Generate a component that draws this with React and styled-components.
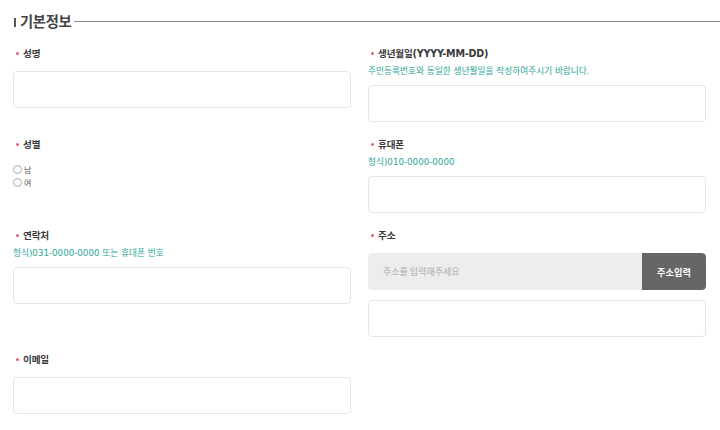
import React from "react";
import styled, { createGlobalStyle } from "styled-components";

const Global = createGlobalStyle`
  html, body { margin: 0; padding: 0; background: #fff; }
  body { font-family: "Noto Sans CJK KR", "Noto Sans", sans-serif; color: #333; }
  * { box-sizing: border-box; }
`;

const Page = styled.div`
  width: 720px;
  height: 430px;
  padding: 13px 0 0 13px;
  overflow: hidden;
`;

const TitleRow = styled.div`
  display: flex;
  align-items: center;
  height: 16px;
  margin-bottom: 17px;
`;

const TitleBar = styled.span`
  width: 2px;
  height: 9px;
  background: #555;
  margin: 2px 4px 0 1px;
`;

const TitleText = styled.h2`
  margin: 0;
  font-size: 14.3px;
  font-weight: 700;
  color: #444;
  line-height: 16px;
  letter-spacing: -0.3px;
`;

const TitleLine = styled.span`
  flex: 1;
  height: 1px;
  background: #8a8a8a;
  margin-left: 3px;
  margin-top: 1px;
`;

const Grid = styled.div`
  display: grid;
  grid-template-columns: 338px 338px;
  column-gap: 17px;
  row-gap: 15px;
  align-items: start;
`;

const Field = styled.div`
  display: flex;
  flex-direction: column;
`;

const Label = styled.div`
  display: flex;
  align-items: center;
  height: 14px;
  font-family: "DejaVu Sans", "Noto Sans CJK KR", sans-serif;
  font-size: 9.6px;
  font-weight: 700;
  color: #3a3a3a;
  margin-bottom: ${(p) => (p.$helper ? "5px" : "11px")};
  padding-left: 3px;
  letter-spacing: -0.2px;
`;

const Dot = styled.span`
  width: 3px;
  height: 3px;
  border-radius: 50%;
  background: #e0607a;
  margin-right: 4px;
`;

const Helper = styled.div`
  font-family: "DejaVu Sans", "Noto Sans CJK KR", sans-serif;
  font-size: 8.7px;
  line-height: 12px;
  color: #2aa596;
  margin-bottom: 8px;
`;

const Input = styled.div`
  height: 37px;
  border: 1px solid #e6e6e6;
  border-radius: 4px;
  background: #fff;
  margin-top: ${(p) => p.$mt || 0}px;
`;

const Radios = styled.div`
  display: flex;
  flex-direction: column;
  margin-top: 1px;
`;

const Radio = styled.label`
  display: flex;
  align-items: center;
  height: 13px;
  font-size: 8px;
  color: #555;
`;

const Circle = styled.span`
  width: 9px;
  height: 9px;
  border-radius: 50%;
  border: 1px solid #aaa;
  margin-right: 2px;
`;

const AddrBar = styled.div`
  display: flex;
  height: 37px;
  border-radius: 4px;
  background: #ededed;
  overflow: hidden;
`;

const AddrPlaceholder = styled.div`
  flex: 1;
  display: flex;
  align-items: center;
  padding-left: 15px;
  font-size: 9px;
  color: #aaa;
`;

const AddrButton = styled.div`
  width: 64px;
  display: flex;
  align-items: center;
  justify-content: center;
  background: #666;
  color: #fff;
  font-size: 9.2px;
  font-weight: 700;
  border-radius: 0 4px 4px 0;
`;

const Req = ({ children, helper }) => (
  <Label $helper={helper}>
    <Dot />
    {children}
  </Label>
);

export default function App() {
  return (
    <Page>
      <Global />
      <TitleRow>
        <TitleBar />
        <TitleText>기본정보</TitleText>
        <TitleLine />
      </TitleRow>
      <Grid>
        <Field>
          <Req>성명</Req>
          <Input />
        </Field>
        <Field>
          <Req helper>생년월일(YYYY-MM-DD)</Req>
          <Helper>주민등록번호와 동일한 생년월일을 작성하여주시기 바랍니다.</Helper>
          <Input />
        </Field>

        <Field>
          <Req>성별</Req>
          <Radios>
            <Radio>
              <Circle />남
            </Radio>
            <Radio>
              <Circle />여
            </Radio>
          </Radios>
        </Field>
        <Field>
          <Req helper>휴대폰</Req>
          <Helper>형식)010-0000-0000</Helper>
          <Input />
        </Field>

        <Field>
          <Req helper>연락처</Req>
          <Helper>형식)031-0000-0000 또는 휴대폰 번호</Helper>
          <Input />
        </Field>
        <Field>
          <Req>주소</Req>
          <AddrBar>
            <AddrPlaceholder>주소를 입력해주세요</AddrPlaceholder>
            <AddrButton>주소입력</AddrButton>
          </AddrBar>
          <Input $mt={10} />
        </Field>

        <Field>
          <Req>이메일</Req>
          <Input />
        </Field>
      </Grid>
    </Page>
  );
}
